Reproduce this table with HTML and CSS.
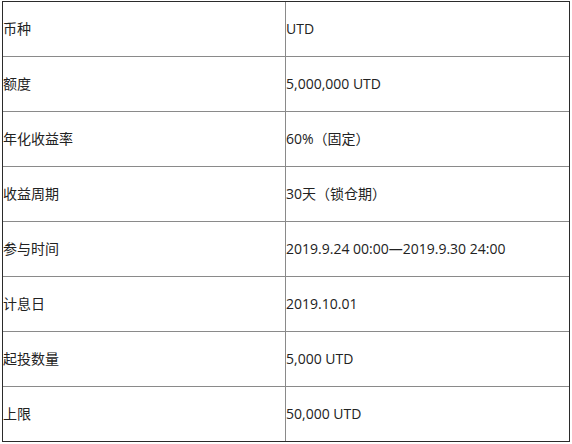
FILE: index.html
```html
<!DOCTYPE html>
<html lang="zh">
<head>
<meta charset="utf-8">
<link rel="stylesheet" href="styles.css">
</head>
<body>
<div class="box">
  <div class="row"><div class="k">币种</div><div class="v">UTD</div></div>
  <div class="row"><div class="k">额度</div><div class="v">5,000,000 UTD</div></div>
  <div class="row"><div class="k">年化收益率</div><div class="v">60%（固定）</div></div>
  <div class="row"><div class="k">收益周期</div><div class="v">30天（锁仓期）</div></div>
  <div class="row"><div class="k">参与时间</div><div class="v">2019.9.24 00:00—2019.9.30 24:00</div></div>
  <div class="row"><div class="k">计息日</div><div class="v">2019.10.01</div></div>
  <div class="row"><div class="k">起投数量</div><div class="v">5,000 UTD</div></div>
  <div class="row"><div class="k">上限</div><div class="v">50,000 UTD</div></div>
</div>
</body>
</html>
```
FILE: styles.css
```css
html, body { margin: 0; padding: 0; background: #fff; }
body {
  font-family: "Open Sans", "Noto Sans CJK SC", sans-serif;
  font-size: 14px;
  color: #222;
}
.box {
  margin: 1px 0 0 2px;
  width: 566px;
  border: 1px solid #2b2b2b;
}
.row {
  display: grid;
  grid-template-columns: 282px 283px;
  height: 54px;
}
.row + .row { border-top: 1px solid #8a8a8a; }
.k, .v {
  display: flex;
  align-items: center;
  line-height: 1;
}
.v { border-left: 1px solid #8a8a8a; }
```
